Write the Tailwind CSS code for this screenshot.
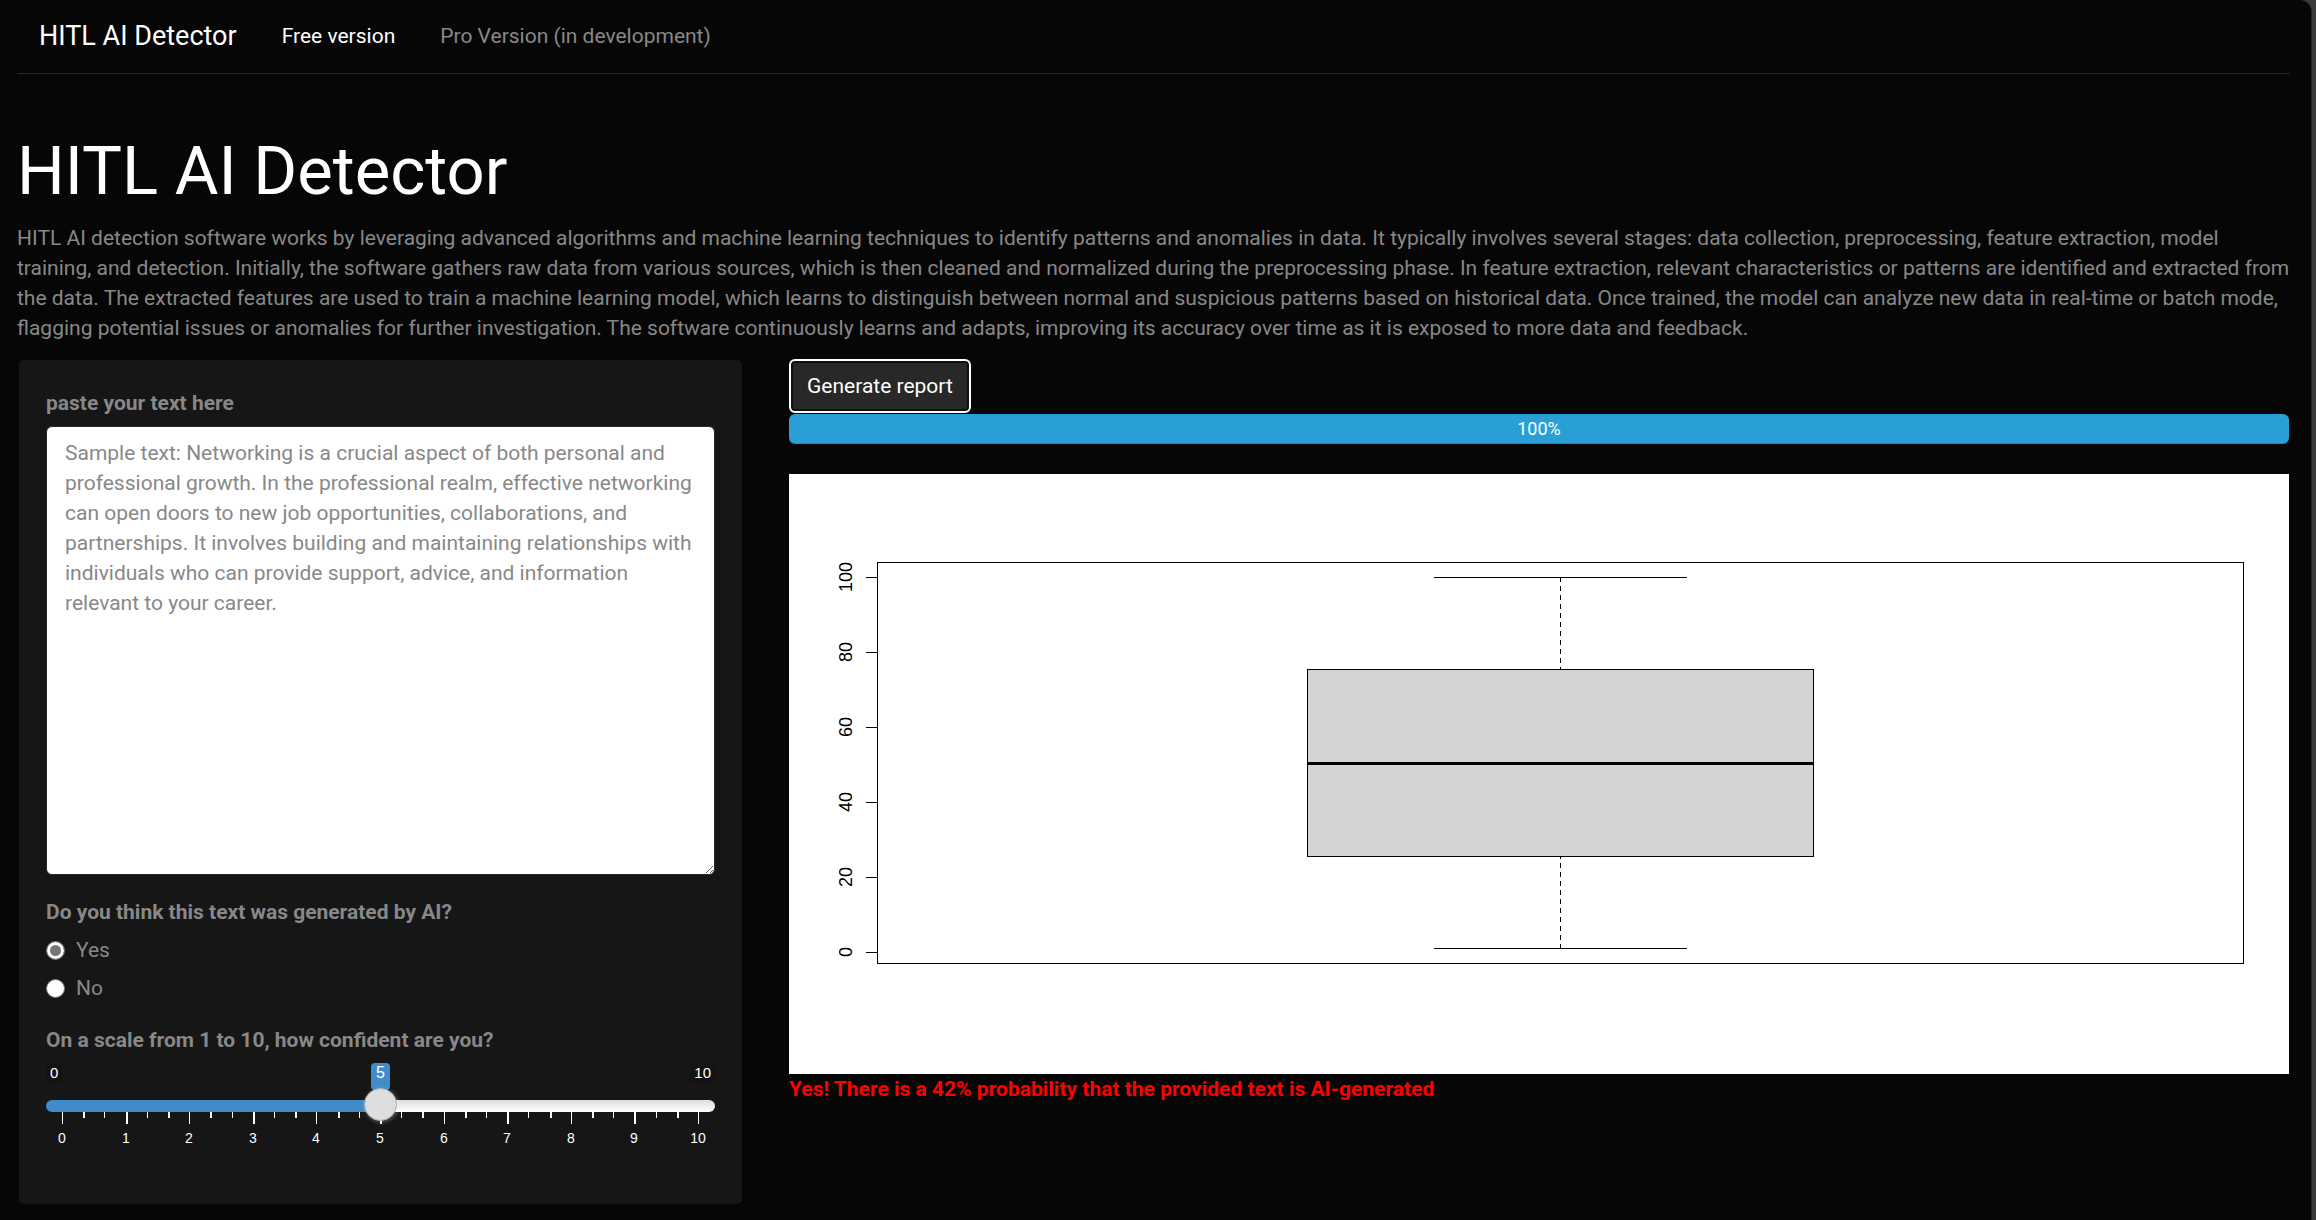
<!DOCTYPE html>
<html lang="en">
<head>
<meta charset="utf-8">
<title>HITL AI Detector</title>
<script src="https://cdn.jsdelivr.net/npm/@tailwindcss/browser@4"></script>
</head>
<body class="bg-[#3b3a38] font-[Roboto,sans-serif] text-[21px] leading-[30px] text-[#888888]">
<div class="mr-1 min-h-screen rounded-tr-xl border-r border-[#232323] bg-[#060606] pr-[21px] pl-[17px]">
  <nav class="flex h-[74px] items-center border-b border-[#282828] pb-px pl-[22px]">
    <a href="#" class="mr-[45px] text-[27px] text-white">HITL AI Detector</a>
    <ul class="flex gap-[45px]">
      <li><a href="#" class="text-white">Free version</a></li>
      <li><a href="#">Pro Version (in development)</a></li>
    </ul>
  </nav>

  <main class="pt-[56px]">
    <h1 class="mb-[11px] text-[67px] leading-[82px] text-white">HITL AI Detector</h1>
    <p>HITL AI detection software works by leveraging advanced algorithms and machine learning techniques to identify patterns and anomalies in data. It typically involves several stages: data collection, preprocessing, feature extraction, model training, and detection. Initially, the software gathers raw data from various sources, which is then cleaned and normalized during the preprocessing phase. In feature extraction, relevant characteristics or patterns are identified and extracted from the data. The extracted features are used to train a machine learning model, which learns to distinguish between normal and suspicious patterns based on historical data. Once trained, the model can analyze new data in real-time or batch mode, flagging potential issues or anomalies for further investigation. The software continuously learns and adapts, improving its accuracy over time as it is exposed to more data and feedback.</p>

    <div class="mt-[16px] grid grid-cols-[725fr_1500fr] items-start gap-[46px] px-px">
      <form class="h-[846px] rounded-md border border-black/60 bg-[#161616] px-[27px] pt-[28px]">
        <label for="text" class="block font-bold">paste your text here</label>
        <textarea id="text" class="mt-[8px] block h-[449px] w-full rounded-md border border-[#282828] bg-white py-[11px] pr-[17px] pl-[18px] text-[#888888]">Sample text: Networking is a crucial aspect of both personal and professional growth. In the professional realm, effective networking can open doors to new job opportunities, collaborations, and partnerships. It involves building and maintaining relationships with individuals who can provide support, advice, and information relevant to your career.</textarea>

        <fieldset class="mt-[22px]">
          <legend class="font-bold">Do you think this text was generated by AI?</legend>
          <div class="mt-[8px] flex flex-col gap-[8px]">
            <label class="flex items-center gap-[11px]"><input type="radio" name="ai" checked class="size-[19px] appearance-none rounded-full border border-[#767676] bg-white checked:bg-[#767676] checked:shadow-[inset_0_0_0_3px_white]">Yes</label>
            <label class="flex items-center gap-[11px]"><input type="radio" name="ai" class="size-[19px] appearance-none rounded-full border border-[#767676] bg-white checked:bg-[#767676] checked:shadow-[inset_0_0_0_3px_white]">No</label>
          </div>
        </fieldset>

        <label for="confidence" class="mt-[22px] block font-bold">On a scale from 1 to 10, how confident are you?</label>
        <div class="mt-[8px] font-['Liberation_Sans',Arial,sans-serif] text-[15px] leading-[20px] text-white">
          <div class="grid h-[27px] grid-cols-[1fr_auto_1fr] items-start">
            <span class="justify-self-start rounded-sm bg-black/10 px-[4px]">0</span>
            <output for="confidence" class="h-[27px] rounded-sm bg-[#428bca] px-[5px] text-[16px]">5</output>
            <span class="justify-self-end rounded-sm bg-black/10 px-[4px]">10</span>
          </div>
          <input id="confidence" type="range" min="0" max="10" value="5" class="relative block h-[32px] w-full appearance-none bg-transparent [&::-webkit-slider-runnable-track]:h-[12px] [&::-webkit-slider-runnable-track]:rounded-full [&::-webkit-slider-runnable-track]:bg-[linear-gradient(to_right,#428bca_50%,transparent_50%),linear-gradient(to_bottom,#dedede,#ffffff)] [&::-webkit-slider-thumb]:-mt-[12px] [&::-webkit-slider-thumb]:size-[33px] [&::-webkit-slider-thumb]:appearance-none [&::-webkit-slider-thumb]:rounded-full [&::-webkit-slider-thumb]:border [&::-webkit-slider-thumb]:border-[#ababab] [&::-webkit-slider-thumb]:bg-[#dedede] [&::-webkit-slider-thumb]:shadow-[1px_1px_4px_rgba(255,255,255,0.3)]">
          <svg class="-mt-[10px] block h-[40px] w-full" viewBox="0 0 669 40" preserveAspectRatio="none" fill="#ffffff" aria-hidden="true">
            <g id="ticks" shape-rendering="crispEdges"></g>
            <g id="tick-labels" font-size="14" text-anchor="middle"></g>
          </svg>
        </div>
      </form>

      <section>
        <button class="block h-[54px] rounded-md border-2 border-white bg-[#282828] px-[16px] text-white shadow-[inset_0_0_0_2px_#101010]">Generate report</button>
        <div class="mt-px flex h-[30px] items-center justify-center rounded-md bg-[#2a9fd6] text-[18px] text-white shadow-[inset_0_-1px_0_rgba(0,0,0,0.15)]">100%</div>
        <svg class="mt-[30px] block w-full bg-white" viewBox="0 0 1500 600" fill="none" stroke="#000000" role="img" aria-label="Box plot of AI probability">
          <rect x="88.5" y="88.5" width="1366" height="401" shape-rendering="crispEdges"/>
          <path d="M77 103.5H88M77 178.5H88M77 253.5H88M77 328.5H88M77 403.5H88M77 478.5H88" shape-rendering="crispEdges"/>
          <g fill="#000000" stroke="none" font-family="'Liberation Sans', Arial, sans-serif" font-size="18" text-anchor="middle">
            <text transform="translate(63 103) rotate(-90)">100</text>
            <text transform="translate(63 178) rotate(-90)">80</text>
            <text transform="translate(63 253) rotate(-90)">60</text>
            <text transform="translate(63 328) rotate(-90)">40</text>
            <text transform="translate(63 403) rotate(-90)">20</text>
            <text transform="translate(63 478) rotate(-90)">0</text>
          </g>
          <g shape-rendering="crispEdges">
            <path d="M645 103.5H898M645 474.5H898"/>
            <path d="M771.5 103V195M771.5 475V383" stroke-dasharray="5 4"/>
            <rect x="518.5" y="195.5" width="506" height="187" fill="#d3d3d3"/>
            <path d="M518 289H1025" stroke-width="3"/>
          </g>
        </svg>
        <p class="font-bold text-[#ff0000]">Yes! There is a 42% probability that the provided text is AI-generated</p>
      </section>
    </div>
  </main>
</div>
<script>
  const ns = 'http://www.w3.org/2000/svg';
  const ticks = document.getElementById('ticks');
  const labels = document.getElementById('tick-labels');
  for (let i = 0; i <= 30; i++) {
    const x = Math.round(16 + i * 636 / 30);
    const major = i % 3 === 0;
    const r = document.createElementNS(ns, 'rect');
    r.setAttribute('x', x);
    r.setAttribute('width', i % 2 ? 2 : 1);
    r.setAttribute('height', major ? 12 : 6);
    ticks.append(r);
    if (major) {
      const t = document.createElementNS(ns, 'text');
      t.setAttribute('x', x);
      t.setAttribute('y', 31);
      t.textContent = i / 3;
      labels.append(t);
    }
  }
</script>
</body>
</html>
